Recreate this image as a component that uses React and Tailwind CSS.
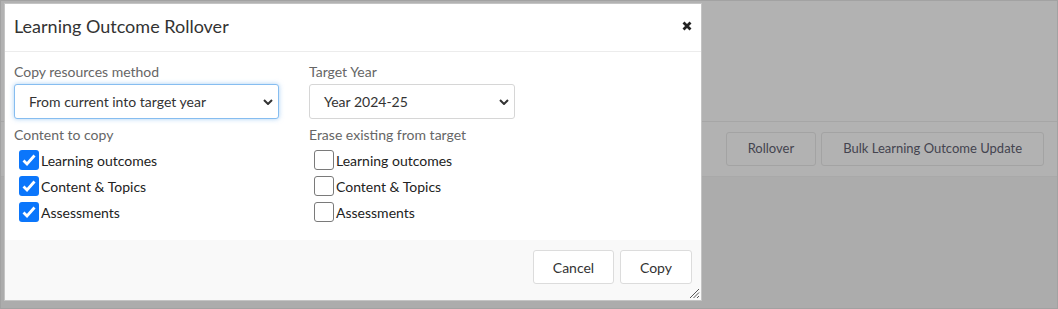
import React from "react";

const Chevron = () => (
  <svg width="10" height="6" viewBox="0 0 10 6" className="shrink-0">
    <path d="M1 1l4 4 4-4" fill="none" stroke="#333" strokeWidth="2" />
  </svg>
);

const Select = ({ value, focused, className }) => (
  <div
    className={
      "flex items-center justify-between h-[35px] rounded-[3px] border bg-white pl-[14px] pr-[5px] text-[14px] text-[#333] " +
      (focused
        ? "border-[#86bdf0] shadow-[0_0_5px_rgba(102,170,235,0.55)] "
        : "border-[#d6d6d6] ") +
      className
    }
  >
    <span>{value}</span>
    <Chevron />
  </div>
);

const Check = ({ checked, label }) => (
  <div className="flex items-center h-[26px] pl-[5px]">
    {checked ? (
      <span className="flex items-center justify-center w-[20px] h-[20px] rounded-[3px] bg-[#0b76fb]">
        <svg width="14" height="12" viewBox="0 0 14 12">
          <path d="M1.5 6.5l3.5 3.5 7.5-8.5" fill="none" stroke="#fff" strokeWidth="2.8" />
        </svg>
      </span>
    ) : (
      <span className="w-[20px] h-[20px] rounded-[3px] border border-[#7a7a7a] bg-white" />
    )}
    <span className="ml-[2px] text-[14px] text-[#222]">{label}</span>
  </div>
);

const items = ["Learning outcomes", "Content & Topics", "Assessments"];

export default function App() {
  return (
    <div className="relative w-[1058px] h-[309px] overflow-hidden bg-[#acacac] border border-[#a2a2a2] font-['Lato',sans-serif]">
      {/* page behind the overlay */}
      <div className="h-[176px] bg-[#b2b2b2] border-b border-[#a9a9a9]">
        <div className="h-[121px] border-b border-[#a6a6a6]" />
        <div className="flex justify-end items-center gap-[5px] h-[54px] pr-[13px]">
          <button className="h-[34px] px-[21px] rounded-[3px] border border-[#a3a3a3] text-[13px] text-[#44444f]">
            Rollover
          </button>
          <button className="h-[34px] px-[21px] rounded-[3px] border border-[#a3a3a3] text-[13px] text-[#44444f]">
            Bulk Learning Outcome Update
          </button>
        </div>
      </div>

      {/* modal */}
      <div className="absolute left-[3px] top-[2px] w-[698px] h-[298px] flex flex-col bg-white border border-[#c4c4c4]">
        <div className="flex items-center justify-between h-[48px] pl-[9px] pr-[9px] pb-[3px] border-b border-[#ececec]">
          <span className="text-[18px] text-[#333]">Learning Outcome Rollover</span>
          <svg width="10" height="10" viewBox="0 0 10 10">
            <path d="M1.5 1.5l7 7M8.5 1.5l-7 7" stroke="#222" strokeWidth="2.8" />
          </svg>
        </div>

        <div className="flex-1 grid grid-cols-[295px_1fr] pl-[9px] pt-[10px]">
          <div className="flex flex-col">
            <span className="h-[20px] leading-[20px] text-[14px] text-[#666]">Copy resources method</span>
            <Select value="From current into target year" focused className="mt-[2px] w-[265px]" />
            <span className="mt-[6px] h-[20px] leading-[20px] text-[14px] text-[#666]">Content to copy</span>
            <div className="mt-[2px]">
              {items.map((t) => (
                <Check key={t} checked label={t} />
              ))}
            </div>
          </div>
          <div className="flex flex-col">
            <span className="h-[20px] leading-[20px] text-[14px] text-[#666]">Target Year</span>
            <Select value="Year 2024-25" className="mt-[2px] w-[206px]" />
            <span className="mt-[6px] h-[20px] leading-[20px] text-[14px] text-[#666]">Erase existing from target</span>
            <div className="mt-[2px]">
              {items.map((t) => (
                <Check key={t} label={t} />
              ))}
            </div>
          </div>
        </div>

        <div className="relative flex justify-end items-start gap-[6px] h-[60px] bg-[#f9f9f9] pt-[10px] pr-[9px]">
          <button className="h-[34px] w-[81px] rounded-[3px] border border-[#dcdcdc] bg-white text-[14px] text-[#333]">
            Cancel
          </button>
          <button className="h-[34px] w-[72px] rounded-[3px] border border-[#dcdcdc] bg-white text-[14px] text-[#333]">
            Copy
          </button>
          <svg width="11" height="11" viewBox="0 0 11 11" className="absolute right-[1px] bottom-[1px]">
            <path d="M10 1L1 10M10 4.5L4.5 10M10 8L8 10" stroke="#555" strokeWidth="1" />
          </svg>
        </div>
      </div>
    </div>
  );
}
